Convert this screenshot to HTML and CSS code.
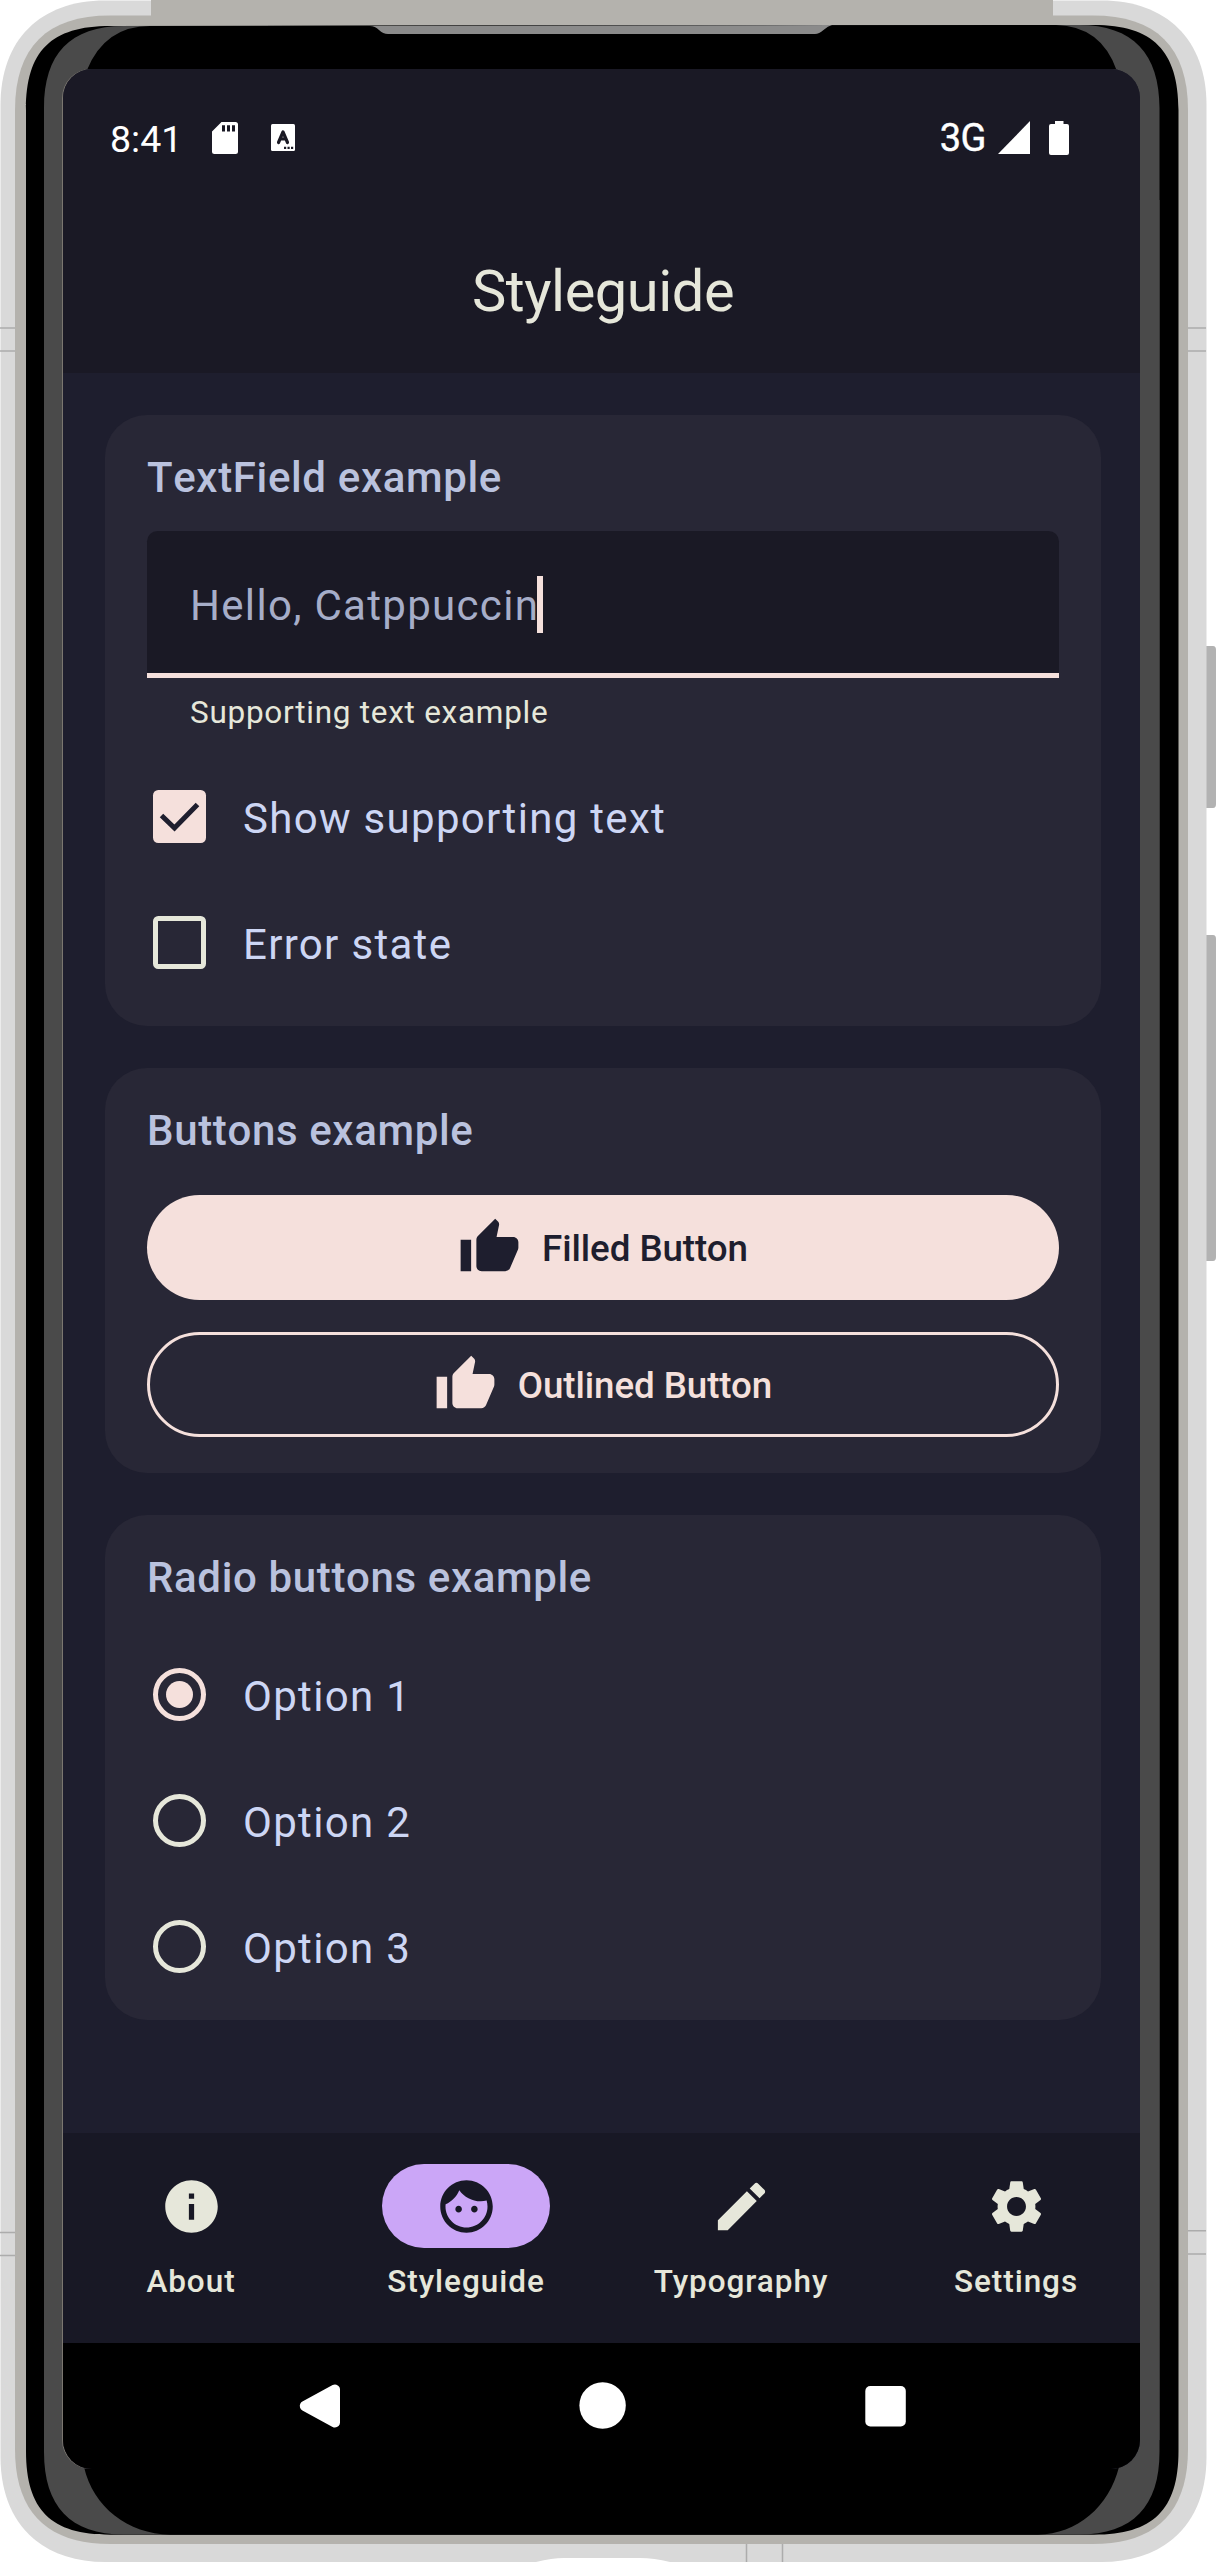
FILE: index.html
```html
<!DOCTYPE html>
<html lang="en">
<head>
<meta charset="utf-8">
<title>Styleguide</title>
<link rel="stylesheet" href="styles.css">
</head>
<body>
<div class="device">
  <svg class="frame" viewBox="0 0 1216 2562" aria-hidden="true">
    <!-- side buttons -->
    <path fill="#b2b2b2" d="M1206 646h7q3 0 3 4v154q0 4-3 4h-7zM1206 935h7q3 0 3 4v318q0 4-3 4h-7z"/>
    <!-- outer case -->
    <path fill="#d9d9d9" d="M.5 105C.5 40 40 .5 105 .5H1101.500C1166.500 .5 1206.500 40 1206.500 105V2457C1206.500 2522 1166.500 2562 1101.500 2562H105C40 2562 .5 2522 .5 2457Z"/>
    <path fill="#fff" d="M536 2562q16-4 28-4h76q14 0 30 4z"/>
    <path stroke="#acacac" stroke-width="1.500" d="M0 328h16M0 351h16M1188 328h18M1188 351h18M0 2232.500h16M0 2255.500h16M1188 2230.700h18M1188 2254h18M746.500 2543v19M782.500 2543v19"/>
    <path fill="#b4b2ad" d="M151 0H1053V20H151Z"/>
    <path fill="#b4b2ad" d="M15 110C15 47 47 15.500 110 15.500H1093C1156 15.500 1188 47 1188 110V2449C1188 2512 1156 2544 1093 2544H110C47 2544 15 2512 15 2449Z"/>
    <!-- bezel -->
    <path fill="#000" d="M26 110C26 51 51 26 110 26L1094 25C1153 25 1178.500 51 1178.500 110V2451C1178.500 2510 1153 2534.700 1094 2534.700H110C51 2534.700 26 2510 26 2451Z"/>
    <path fill="#4a4a4a" d="M44 108C44 54 70 26 124 26H147L1059 25H1079C1133 25 1159.500 54 1159.500 108V2452C1159.500 2506 1133 2534.500 1079 2534.500H124C70 2534.500 44 2506 44 2452Z"/>
    <path fill="#000" d="M87 70Q105 26 150 26L1056 25Q1101 26 1116.500 70L1136 300V2300L1119 2467C1109 2507 1077 2534 1038 2534.700H170C128 2534 93 2507 84 2467L68 2300V300Z"/>
    <path fill="#4a4a4a" d="M44 200H68V2440H44ZM1136 200H1159.500V2440H1136ZM62 108V200H90V70ZM1141 108V200H1112V70ZM62 2440V2300H88V2464ZM1141 2440V2300H1114V2464Z"/>
    <path fill="#4a4a4a" d="M62 70H87V110H62ZM1116.500 70H1142V110H1116.500ZM62 2430H84V2467H62ZM1119 2430H1142V2467H1119Z"/>
    <path fill="#8b8b8b" d="M370 26q5 0 9 4t9 4H815q4 0 8.500-4t8.500-5z"/>
  </svg>

  <main class="screen">
    <div class="app">
      <div class="status">
        <div class="status-left">
          <span class="clock">8:41</span>
          <svg class="sd" viewBox="0 0 26 32"><path fill="#fff" fill-rule="evenodd" d="M9.500 0H23.500Q26 0 26 2.500V29.500Q26 32 23.500 32H2.500Q0 32 0 29.500V9.500ZM10 3.300V9.500H13V3.300ZM15 3.300V9.500H18V3.300ZM20 3.300V9.500H23V3.300Z"/></svg>
          <svg class="kb" viewBox="0 0 24 27"><rect width="24" height="27" rx="1.500" fill="#fff"/><path fill="none" stroke="#1a1924" stroke-width="3.200" stroke-linecap="round" stroke-linejoin="round" d="M7.500 18.500 12 8 16.500 18.500M9 15H15"/><path fill="#1a1924" d="M13 22.800h2.200v2.200H13zM16.500 22.800h2.200v2.200h-2.200zM20 22.800h2.200v2.200H20z"/></svg>
        </div>
        <div class="status-right">
          <span class="network">3G</span>
          <svg class="signal" viewBox="0 0 32 33"><path fill="#fff" d="M32 0V33H0Z"/></svg>
          <svg class="battery" viewBox="0 0 20 34"><path fill="#fff" d="M6 0H14.500V3H18Q20 3 20 5V32Q20 34 18 34H2Q0 34 0 32V5Q0 3 2 3H6Z"/></svg>
        </div>
      </div>

      <header class="topbar"><h1>Styleguide</h1></header>

      <div class="content">
        <section class="card card-field">
          <h2>TextField example</h2>
          <div class="field"><span>Hello, Catppuccin</span><i class="caret"></i></div>
          <p class="supporting">Supporting text example</p>
          <div class="rows">
            <label class="row"><span class="check checked"><svg viewBox="0 0 53 53"><path fill="none" stroke="#1e1e2e" stroke-width="5" d="m8.500 25.500 13 12.500 23-23.500"/></svg></span><span class="row-text">Show supporting text</span></label>
            <label class="row"><span class="check"></span><span class="row-text">Error state</span></label>
          </div>
        </section>

        <section class="card card-buttons">
          <h2>Buttons example</h2>
          <div class="buttons">
            <button class="btn filled"><svg class="icon" viewBox="0 0 24 24"><path d="M1 21h4V9H1v12zm22-11c0-1.100-.9-2-2-2h-6.310l.95-4.570.03-.32c0-.41-.17-.79-.44-1.060L14.170 1 7.590 7.590C7.220 7.950 7 8.450 7 9v10c0 1.100.9 2 2 2h9c.83 0 1.540-.5 1.840-1.220l3.020-7.050c.09-.23.14-.47.14-.73v-2z"/></svg><span>Filled Button</span></button>
            <button class="btn outlined"><svg class="icon" viewBox="0 0 24 24"><path d="M1 21h4V9H1v12zm22-11c0-1.100-.9-2-2-2h-6.310l.95-4.570.03-.32c0-.41-.17-.79-.44-1.060L14.170 1 7.590 7.590C7.220 7.950 7 8.450 7 9v10c0 1.100.9 2 2 2h9c.83 0 1.540-.5 1.840-1.220l3.020-7.050c.09-.23.14-.47.14-.73v-2z"/></svg><span>Outlined Button</span></button>
          </div>
        </section>

        <section class="card card-radios">
          <h2>Radio buttons example</h2>
          <div class="rows">
            <label class="row"><span class="radio selected"></span><span class="row-text">Option 1</span></label>
            <label class="row"><span class="radio"></span><span class="row-text">Option 2</span></label>
            <label class="row"><span class="radio"></span><span class="row-text">Option 3</span></label>
          </div>
        </section>
      </div>

      <nav class="tabs">
        <a class="tab"><span class="pill"><svg class="icon" viewBox="0 0 24 24"><path d="M12 2C6.480 2 2 6.480 2 12s4.480 10 10 10 10-4.480 10-10S17.520 2 12 2zm1 15h-2v-6h2v6zm0-8h-2V7h2v2z"/></svg></span>About</a>
        <a class="tab active"><span class="pill"><svg class="icon" viewBox="0 0 24 24"><path d="M9 11.750c-.69 0-1.250.56-1.250 1.250s.56 1.250 1.250 1.250 1.250-.56 1.250-1.250-.56-1.250-1.250-1.250zm6 0c-.69 0-1.250.56-1.250 1.250s.56 1.250 1.250 1.250 1.250-.56 1.250-1.250-.56-1.250-1.250-1.250zM12 2C6.480 2 2 6.480 2 12s4.480 10 10 10 10-4.480 10-10S17.520 2 12 2zm0 18c-4.410 0-8-3.590-8-8 0-.29.02-.58.05-.86 2.360-1.050 4.230-2.980 5.210-5.370C11.070 8.330 14.050 10 17.420 10c.78 0 1.530-.09 2.250-.26.210.71.330 1.470.330 2.260 0 4.410-3.590 8-8 8z"/></svg></span>Styleguide</a>
        <a class="tab"><span class="pill"><svg class="icon" viewBox="0 0 24 24"><path d="M3 17.250V21h3.750L17.810 9.940l-3.750-3.750L3 17.250zM20.710 7.040c.39-.39.39-1.020 0-1.410l-2.340-2.340c-.39-.39-1.020-.39-1.410 0l-1.830 1.830 3.750 3.750 1.830-1.830z"/></svg></span>Typography</a>
        <a class="tab"><span class="pill"><svg class="icon" viewBox="0 0 24 24"><path d="M19.140 12.940c.04-.3.060-.61.060-.94 0-.32-.02-.64-.07-.94l2.030-1.580c.18-.14.23-.41.120-.61l-1.920-3.320c-.12-.22-.37-.29-.59-.22l-2.390.96c-.5-.38-1.030-.7-1.620-.94l-.36-2.540c-.04-.24-.24-.41-.48-.41h-3.840c-.24 0-.43.17-.47.41l-.36 2.540c-.59.24-1.130.57-1.620.94l-2.390-.96c-.22-.08-.47 0-.59.22L2.740 8.870c-.12.21-.08.47.120.61l2.030 1.580c-.05.3-.09.63-.09.94s.02.64.07.94l-2.030 1.580c-.18.14-.23.41-.12.61l1.920 3.320c.12.22.37.29.59.22l2.390-.96c.5.38 1.030.7 1.620.94l.36 2.540c.05.24.24.41.48.41h3.840c.24 0 .44-.17.47-.41l.36-2.540c.59-.24 1.130-.56 1.620-.94l2.390.96c.22.08.47 0 .59-.22l1.920-3.320c.12-.22.070-.47-.12-.61l-2.010-1.580zM12 15.600c-1.980 0-3.600-1.620-3.600-3.600s1.620-3.600 3.600-3.600 3.600 1.620 3.600 3.600-1.620 3.600-3.600 3.600z"/></svg></span>Settings</a>
      </nav>

      <div class="system">
        <svg viewBox="0 0 48 48"><path fill="#fff" stroke="#fff" stroke-width="10" stroke-linejoin="round" d="M8.800 25 39 8.500V41.500Z"/></svg>
        <svg viewBox="0 0 48 48"><circle cx="23.600" cy="24.500" r="23.200" fill="#fff"/></svg>
        <svg viewBox="0 0 48 48"><rect x="3.300" y="5" width="40.500" height="40.500" rx="5" fill="#fff"/></svg>
      </div>
    </div>
  </main>
</div>
</body>
</html>
```

FILE: styles.css
```css
* { box-sizing: border-box; margin: 0; padding: 0; }

body {
  background: #fff;
  font-family: Roboto, "Liberation Sans", sans-serif;
}

.device {
  position: relative;
  width: 1216px;
  height: 2562px;
  padding: 69px 0 0 63px;
  overflow: hidden;
}

.frame {
  position: absolute;
  left: 0;
  top: 0;
  width: 1216px;
  height: 2562px;
}

.screen {
  position: relative;
  width: 1077px;
  height: 2400px;
  overflow: hidden;
  border-radius: 29px;
  background: #1e1e2e;
  box-shadow: -1px 0 0 #7b7770;
}

.app {
  display: flex;
  flex-direction: column;
  width: 1080px;
  height: 2400px;
}

/* Status bar */
.status {
  display: flex;
  justify-content: space-between;
  align-items: center;
  height: 136px;
  padding: 1px 74px 0 47px;
  background: #1a1925;
  color: #fff;
  font-size: 37.5px;
}
.status-left, .status-right { display: flex; align-items: center; }
.clock { line-height: 44px; width: 67px; white-space: nowrap; padding-top: 2px; }
.sd { width: 26px; height: 32px; margin-left: 35px; }
.kb { width: 24px; height: 27px; margin-left: 33px; }
.network { font-size: 38px; line-height: 44px; letter-spacing: -0.5px; -webkit-text-stroke: 0.4px #fff; }
.signal { width: 32px; height: 33px; margin: -1px 0 0 12px; }
.battery { width: 20px; height: 34px; margin-left: 19px; }

/* Top bar */
.topbar {
  display: flex;
  align-items: center;
  justify-content: center;
  height: 168px;
  background: #1a1925;
}
.topbar h1 {
  font-size: 57.75px;
  font-weight: 400;
  line-height: 73.5px;
  letter-spacing: -0.45px;
  color: #e6e7da;
  padding-top: 5px;
}

/* Cards */
.content {
  display: flex;
  flex-direction: column;
  gap: 42px;
  height: 1760px;
  padding: 42px;
}
.card {
  display: flex;
  flex-direction: column;
  flex: none;
  padding: 31px 42px 0;
  border-radius: 42px;
  background: #282736;
}
.card-field { height: 611px; }
.card-buttons { height: 405px; }
.card-radios { height: 505px; }
.card h2 {
  font-size: 42px;
  font-weight: 500;
  line-height: 63px;
  letter-spacing: 0.64px;
  font-kerning: none;
  color: #bac2de;
}

.field {
  display: flex;
  align-items: center;
  height: 147px;
  margin-top: 22px;
  padding-left: 43px;
  border-bottom: 5px solid #f5e0dc;
  border-radius: 10.5px 10.5px 0 0;
  background: #1a1925;
  color: #a6adc8;
  font-size: 42px;
  line-height: 63px;
  letter-spacing: 1.31px;
}
.field span { padding-top: 7px; }
.caret { width: 6px; height: 57px; margin: 4px 0 0 -2px; background: #f5e0dc; }

.supporting {
  margin: 14px 0 0 43px;
  height: 42px;
  font-size: 31.5px;
  line-height: 42px;
  letter-spacing: 0.73px;
  color: #e6e7da;
}

.rows { display: flex; flex-direction: column; }
.card-field .rows { margin-top: 19px; }
.card-radios .rows { margin-top: 22px; }
.row {
  display: flex;
  align-items: center;
  gap: 37px;
  height: 126px;
  padding-left: 6px;
}
.row-text {
  padding-top: 5px;
  font-size: 42px;
  line-height: 63px;
  letter-spacing: 1.31px;
  color: #cdd6f4;
}
.check {
  width: 53px;
  height: 53px;
  border: 5.25px solid #e6e7da;
  border-radius: 5.25px;
}
.check.checked { border: 0; background: #f5e0dc; }
.check svg { display: block; width: 53px; height: 53px; }
.radio {
  display: grid;
  place-items: center;
  width: 53px;
  height: 53px;
  border: 5.25px solid #e6e7da;
  border-radius: 50%;
}
.radio.selected { border-color: #f5e0dc; }
.radio.selected::after {
  content: "";
  width: 27px;
  height: 27px;
  border-radius: 50%;
  background: #f5e0dc;
}

/* Buttons */
.icon { width: 63px; height: 63px; fill: currentColor; }
.buttons { display: flex; flex-direction: column; gap: 32px; margin-top: 33px; }
.btn {
  display: flex;
  align-items: center;
  justify-content: center;
  gap: 21px;
  height: 105px;
  border: 0;
  border-radius: 53px;
  font: 500 36.75px/52px Roboto, "Liberation Sans", sans-serif;
  letter-spacing: -0.08px;
}
.btn span { padding-top: 3px; }
.filled { background: #f5e0dc; color: #1e1e2e; }
.outlined { background: none; border: 3px solid #f5e0dc; color: #f5e0dc; }

/* Bottom navigation */
.tabs {
  display: flex;
  gap: 21px;
  height: 210px;
  padding: 31px 0 0 1px;
  background: #181825;
}
.tab {
  display: flex;
  flex: 1 1 0;
  flex-direction: column;
  align-items: center;
  gap: 13px;
  font-size: 31.5px;
  font-weight: 500;
  line-height: 42px;
  letter-spacing: 0.95px;
  color: #e6e7da;
}
.pill {
  display: grid;
  place-items: center;
  width: 168px;
  height: 84px;
  border-radius: 42px;
}
.active .pill { background: #cba6f7; color: #181825; }

/* System navigation */
.system {
  display: flex;
  justify-content: center;
  gap: 235px;
  height: 126px;
  padding-top: 38px;
  background: #000;
}
.system svg { width: 48px; height: 48px; }
```
